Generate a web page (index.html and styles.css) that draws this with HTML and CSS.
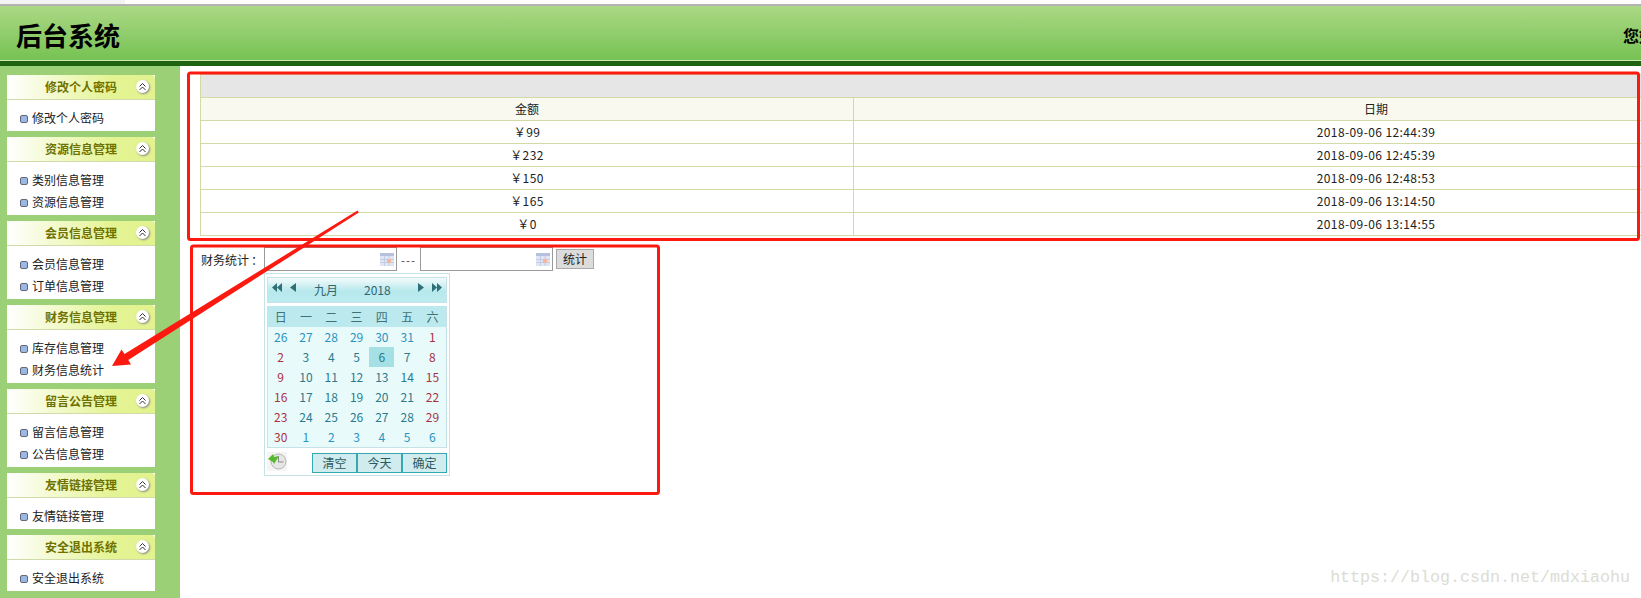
FILE: index.html
```html
<!DOCTYPE html>
<html lang="zh">
<head>
<meta charset="utf-8">
<title>后台系统</title>
<link rel="stylesheet" href="styles.css">
</head>
<body>
<div class="page">
  <div class="browser-strip"></div>
  <header class="top">
    <h1 class="brand">后台系统</h1>
    <div class="welcome">您好，admin</div>
  </header>
  <div class="main">
    <aside class="side">
      <section class="panel"><div class="panel-title"><span class="panel-name">修改个人密码</span><span class="collapse"><svg viewBox="0 0 9 9" width="9" height="9"><path d="M1.500 4.500 4.500 1.500 7.500 4.500M1.500 8 4.500 5 7.500 8" fill="none" stroke="#333" stroke-width="1"/></svg></span></div>
        <ul class="panel-body"><li>修改个人密码</li></ul></section>
      <section class="panel"><div class="panel-title"><span class="panel-name">资源信息管理</span><span class="collapse"><svg viewBox="0 0 9 9" width="9" height="9"><path d="M1.500 4.500 4.500 1.500 7.500 4.500M1.500 8 4.500 5 7.500 8" fill="none" stroke="#333" stroke-width="1"/></svg></span></div>
        <ul class="panel-body"><li>类别信息管理</li><li>资源信息管理</li></ul></section>
      <section class="panel"><div class="panel-title"><span class="panel-name">会员信息管理</span><span class="collapse"><svg viewBox="0 0 9 9" width="9" height="9"><path d="M1.500 4.500 4.500 1.500 7.500 4.500M1.500 8 4.500 5 7.500 8" fill="none" stroke="#333" stroke-width="1"/></svg></span></div>
        <ul class="panel-body"><li>会员信息管理</li><li>订单信息管理</li></ul></section>
      <section class="panel"><div class="panel-title"><span class="panel-name">财务信息管理</span><span class="collapse"><svg viewBox="0 0 9 9" width="9" height="9"><path d="M1.500 4.500 4.500 1.500 7.500 4.500M1.500 8 4.500 5 7.500 8" fill="none" stroke="#333" stroke-width="1"/></svg></span></div>
        <ul class="panel-body"><li>库存信息管理</li><li>财务信息统计</li></ul></section>
      <section class="panel"><div class="panel-title"><span class="panel-name">留言公告管理</span><span class="collapse"><svg viewBox="0 0 9 9" width="9" height="9"><path d="M1.500 4.500 4.500 1.500 7.500 4.500M1.500 8 4.500 5 7.500 8" fill="none" stroke="#333" stroke-width="1"/></svg></span></div>
        <ul class="panel-body"><li>留言信息管理</li><li>公告信息管理</li></ul></section>
      <section class="panel"><div class="panel-title"><span class="panel-name">友情链接管理</span><span class="collapse"><svg viewBox="0 0 9 9" width="9" height="9"><path d="M1.500 4.500 4.500 1.500 7.500 4.500M1.500 8 4.500 5 7.500 8" fill="none" stroke="#333" stroke-width="1"/></svg></span></div>
        <ul class="panel-body"><li>友情链接管理</li></ul></section>
      <section class="panel"><div class="panel-title"><span class="panel-name">安全退出系统</span><span class="collapse"><svg viewBox="0 0 9 9" width="9" height="9"><path d="M1.500 4.500 4.500 1.500 7.500 4.500M1.500 8 4.500 5 7.500 8" fill="none" stroke="#333" stroke-width="1"/></svg></span></div>
        <ul class="panel-body"><li>安全退出系统</li></ul></section>
    </aside>
    <main class="content">
      <table class="data">
        <colgroup><col class="col-a"><col></colgroup>
        <thead>
          <tr class="head-blank"><th colspan="2"></th></tr>
          <tr class="head-cols"><th>金额</th><th>日期</th></tr>
        </thead>
        <tbody>
          <tr><td>￥99</td><td>2018-09-06 12:44:39</td></tr>
          <tr><td>￥232</td><td>2018-09-06 12:45:39</td></tr>
          <tr><td>￥150</td><td>2018-09-06 12:48:53</td></tr>
          <tr><td>￥165</td><td>2018-09-06 13:14:50</td></tr>
          <tr><td>￥0</td><td>2018-09-06 13:14:55</td></tr>
        </tbody>
      </table>
      <form class="filter">
        <span class="filter-label">财务统计<span class="colon">：</span></span>
        <span class="date-input"><svg class="cal-icon" viewBox="0 0 14 13" width="14" height="13"><rect width="14" height="13" fill="#dfe5f2"/><rect width="14" height="3" fill="#b4c2de"/><path d="M0 6.500h14M0 9.500h14M4.500 3v10M9 3v10" stroke="#c3cee5"/><rect x="7" y="6" width="4" height="4" fill="#f0b8a4"/></svg></span>
        <span class="dash">---</span>
        <span class="date-input"><svg class="cal-icon" viewBox="0 0 14 13" width="14" height="13"><rect width="14" height="13" fill="#dfe5f2"/><rect width="14" height="3" fill="#b4c2de"/><path d="M0 6.500h14M0 9.500h14M4.500 3v10M9 3v10" stroke="#c3cee5"/><rect x="7" y="6" width="4" height="4" fill="#f0b8a4"/></svg></span>
        <button class="stat-btn" type="button">统计</button>
      </form>
      <div class="picker">
        <div class="picker-head">
          <span class="nav-group"><svg viewBox="0 0 10 9" width="10" height="9"><path d="M5 0v9L0 4.500zM10 0v9L5 4.500z" fill="#2f6f78"/></svg><svg viewBox="0 0 6 9" width="6" height="9"><path d="M6 0v9L0 4.500z" fill="#2f6f78"/></svg></span>
          <span class="picker-title"><span>九月</span><span>2018</span></span>
          <span class="nav-group"><svg viewBox="0 0 6 9" width="6" height="9"><path d="M0 0v9l6-4.500z" fill="#2f6f78"/></svg><svg viewBox="0 0 10 9" width="10" height="9"><path d="M0 0v9l5-4.500zM5 0v9l5-4.500z" fill="#2f6f78"/></svg></span>
        </div>
        <div class="picker-body">
          <div class="weeks"><span>日</span><span>一</span><span>二</span><span>三</span><span>四</span><span>五</span><span>六</span></div>
          <div class="days">
            <span class="o">26</span><span class="o">27</span><span class="o">28</span><span class="o">29</span><span class="o">30</span><span class="o">31</span><span class="w">1</span>
            <span class="w">2</span><span>3</span><span>4</span><span>5</span><span class="sel">6</span><span>7</span><span class="w">8</span>
            <span class="w">9</span><span>10</span><span>11</span><span>12</span><span>13</span><span>14</span><span class="w">15</span>
            <span class="w">16</span><span>17</span><span>18</span><span>19</span><span>20</span><span>21</span><span class="w">22</span>
            <span class="w">23</span><span>24</span><span>25</span><span>26</span><span>27</span><span>28</span><span class="w">29</span>
            <span class="w">30</span><span class="o">1</span><span class="o">2</span><span class="o">3</span><span class="o">4</span><span class="o">5</span><span class="o">6</span>
          </div>
        </div>
        <div class="picker-foot">
          <svg class="clock" viewBox="0 0 20 19" width="20" height="19"><rect width="20" height="19" fill="#f4f4f4"/><circle cx="11.500" cy="9.500" r="7.500" fill="#e6e6e6" stroke="#b5b5b5"/><path d="M11.500 4v6h5" fill="none" stroke="#888"/><path d="M1 7l5-5 1 3 5-1-5 8-1-2z" fill="#58b82c"/></svg>
          <span class="foot-btns"><span>清空</span><span>今天</span><span>确定</span></span>
        </div>
      </div>
    </main>
  </div>
  <svg class="marks" viewBox="0 0 1641 598" width="1641" height="598">
    <rect x="188.500" y="73" width="1450" height="166.500" rx="2" fill="none" stroke="#fc1a10" stroke-width="3"/>
    <rect x="191.500" y="246" width="467" height="247.500" rx="2" fill="none" stroke="#fc1a10" stroke-width="3"/>
    <path d="M357.500 210.500 124.500 354 121.500 349.500 112 366 131 364.500 128.300 360 358.800 212.500z" fill="#fc1a10"/>
  </svg>
  <div class="watermark">https://blog.csdn.net/mdxiaohu</div>
</div>
</body>
</html>
```
FILE: styles.css
```css
* { box-sizing: border-box; }
html, body { margin: 0; padding: 0; height: 100%; overflow: hidden; background: #fff; }
body { font-family: "Noto Sans CJK SC", "Liberation Sans", sans-serif; font-size: 12px; color: #222; }
.page { position: relative; width: 1641px; height: 598px; overflow: hidden; }
.browser-strip { height: 6px; background: linear-gradient(90deg, #f3f3f3 0 125px, #fff 125px 1641px); border-bottom: 2px solid #b3b3b3; }
.top { height: 60px; display: flex; justify-content: space-between; align-items: center; background: linear-gradient(#acd885, #76c253 54px, #cbe8b0 54px, #cbe8b0 55px); border-bottom: 5px solid #1f6210; padding: 0 0 0 16px; overflow: hidden; }
.brand { margin: 0; font-size: 26px; line-height: 28px; font-weight: 700; color: #000; padding-top: 3px; }
.welcome { font-size: 16px; font-weight: 700; color: #000; width: 100px; flex: none; margin-right: -82px; padding-top: 2px; white-space: nowrap; }
.main { display: flex; height: 532px; }
.side { width: 180px; flex: none; background: #9cd077; padding: 9px 25px 0 7px; display: flex; flex-direction: column; gap: 6px; }
.panel { background: #fff; }
.panel-title { height: 25px; display: flex; align-items: center; position: relative; background: linear-gradient(90deg, #fff 0, #e4f494 70%, #e2f28e 100%); border-bottom: 1px solid #cfdcaa; border-radius: 4px 4px 0 0; }
.panel-name { margin-left: 38px; color: #6f7200; font-weight: 700; line-height: 24px; }
.collapse { position: absolute; right: 6px; top: 5px; width: 13px; height: 13px; border-radius: 50%; background: #fff; box-shadow: 1px 1px 2px #888; display: flex; align-items: center; justify-content: center; }
.panel-body { list-style: none; margin: 0; padding: 7px 0 2px; }
.panel-body li { height: 22px; line-height: 22px; padding-left: 25px; position: relative; color: #222; }
.panel-body li::before { content: ""; position: absolute; left: 13px; top: 8px; width: 6px; height: 6px; border: 1px solid #667; border-radius: 2px; background: #9ab8e6; }
.content { flex: 1; padding: 8px 0 0 20px; min-width: 0; overflow: hidden; }
.data { width: 1699px; border-collapse: collapse; table-layout: fixed; border: 1px solid #d2dba6; text-align: center; }
.data th, .data td { height: 23px; font-weight: 400; padding: 0; border: 1px solid #d2dba6; color: #222; line-height: 22px; }
.data td { letter-spacing: 0.4px; }
.data .col-a { width: 653px; }
.head-blank th { background: #e6e6e6; }
.head-cols th { background: #f9f9f0; }
.filter { display: flex; align-items: center; height: 24px; margin-top: 11px; }
.filter-label { width: 64px; padding-left: 1px; flex: none; color: #222; white-space: nowrap; }
.colon { font-family: "Noto Sans CJK TC", sans-serif; margin-left: 2px; }
.date-input { width: 133px; height: 24px; border: 1px solid #999; background: #fff; position: relative; flex: none; }
.cal-icon { position: absolute; right: 2px; top: 5px; }
.dash { width: 23px; text-align: center; flex: none; color: #000; font-weight: 300; letter-spacing: 1px; }
.stat-btn { margin-left: 3px; width: 38px; height: 20px; padding: 0; font: inherit; line-height: 18px; color: #222; background: #dcdcdc; border: 1px solid #aaa; }
.picker { width: 186px; height: 203px; margin: 2px 0 0 64px; border: 1px solid #c6e2e6; padding: 3px 2px 0; background: #fff; }
.picker-head { height: 26px; border: 1px solid #c6e2e6; background: linear-gradient(#f4fbfb, #b7e8ec 55%, #bcecef); display: flex; justify-content: space-between; padding: 5px 4px 0; color: #2f6670; }
.nav-group { display: flex; gap: 8px; align-items: flex-start; }
.picker-title { display: flex; gap: 26px; width: 78px; white-space: nowrap; line-height: 18px; position: relative; left: -4px; top: -2px; }
.picker-body { margin-top: 3px; border: 1px solid #c6e2e6; border-top: 0; background: #e9fafb; height: 142px; }
.weeks, .days { display: grid; grid-template-columns: repeat(7, 25.3px); }
.weeks { background: #bce9ed; }
.weeks span { height: 21px; line-height: 21px; text-align: center; color: #3c7378; }
.days span { height: 20px; line-height: 20px; text-align: center; color: #2a7a8c; }
.days .o { color: #2a93c0; }
.days .w { color: #a8323f; }
.days .sel { background: #a5e0e4; }
.picker-foot { display: flex; justify-content: space-between; padding-top: 5px; }
.clock { margin-top: -1px; }
.foot-btns { display: flex; }
.foot-btns span { width: 45px; height: 20px; line-height: 18px; text-align: center; border: 1px solid #35a9b2; background: #d0ecee; color: #2a5a60; }
.marks { position: absolute; left: 0; top: 0; pointer-events: none; }
.watermark { position: absolute; right: 11px; top: 568px; font-family: "Liberation Mono", monospace; font-size: 16.67px; color: #dcdcd4; }
```
